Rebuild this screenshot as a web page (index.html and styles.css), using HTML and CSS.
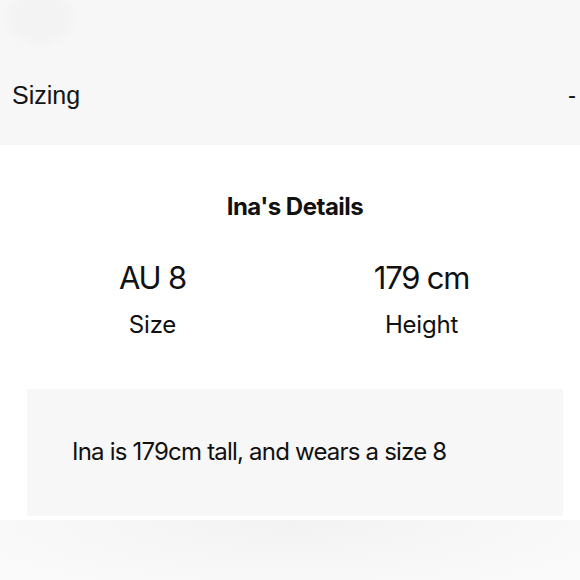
FILE: index.html
```html
<!DOCTYPE html>
<html lang="en">
<head>
<meta charset="utf-8">
<link rel="stylesheet" href="styles.css">
</head>
<body>
  <header class="accordion-head">
    <div class="bg-blob"></div>
    <span class="head-title">Sizing</span>
    <span class="head-toggle">-</span>
  </header>
  <section class="details">
    <h2 class="details-title">Ina's Details</h2>
    <div class="stats">
      <div class="stat">
        <div class="stat-value">AU 8</div>
        <div class="stat-label">Size</div>
      </div>
      <div class="stat">
        <div class="stat-value">179 cm</div>
        <div class="stat-label">Height</div>
      </div>
    </div>
    <div class="note">
      <p class="note-text">Ina is 179cm tall, and wears a size 8</p>
    </div>
  </section>
  <div class="footer-fade"></div>
</body>
</html>
```
FILE: styles.css
```css
html, body {
  margin: 0;
  padding: 0;
  background: #ffffff;
  width: 580px;
  height: 580px;
  overflow: hidden;
}

body {
  font-family: "Inter", "Liberation Sans", sans-serif;
  color: #111111;
}

.accordion-head {
  position: relative;
  height: 145px;
  box-sizing: border-box;
  background: #f7f7f7;
  display: flex;
  align-items: flex-start;
  justify-content: space-between;
  padding: 80px 4px 0 12px;
  overflow: hidden;
}

.bg-blob {
  position: absolute;
  left: 8px;
  top: -8px;
  width: 64px;
  height: 52px;
  border-radius: 50%;
  background: #f3f3f3;
  filter: blur(3px);
}

.head-title {
  position: relative;
  font-family: "Liberation Sans", Arial, sans-serif;
  font-size: 25px;
  line-height: 30px;
  color: #151515;
}

.head-toggle {
  position: relative;
  font-family: "Liberation Sans", Arial, sans-serif;
  font-size: 24px;
  line-height: 30px;
  color: #151515;
}

.details {
  padding-top: 49px;
}

.details-title {
  margin: 0;
  text-align: center;
  font-size: 24px;
  line-height: 26px;
  font-weight: 700;
  letter-spacing: -0.5px;
  padding-left: 10px;
}

.stats {
  display: grid;
  grid-template-columns: 1fr 1fr;
  padding: 40px 24px 0 18px;
}

.stat {
  display: flex;
  flex-direction: column;
  align-items: center;
}

.stat-value {
  font-size: 31px;
  line-height: 36px;
  letter-spacing: -1.2px;
  font-weight: 400;
}

.stat-label {
  margin-top: 16px;
  font-size: 24px;
  line-height: 26px;
  letter-spacing: -0.2px;
}

.note {
  margin: 51px 17px 0 27px;
  height: 127px;
  box-sizing: border-box;
  background: #f7f7f7;
  padding: 50px 0 0 45px;
}

.note-text {
  margin: 0;
  font-size: 24px;
  line-height: 26px;
  letter-spacing: -0.8px;
}

.footer-fade {
  margin-top: 4px;
  height: 60px;
  background: radial-gradient(ellipse 60% 130% at 50% 0%, #f2f2f2 0%, #f6f6f6 45%, #fafafa 100%);
}
```
